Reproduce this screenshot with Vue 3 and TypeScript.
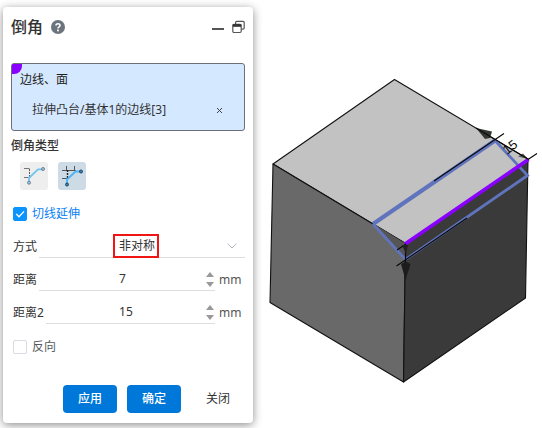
<script setup lang="ts">
import { ref } from 'vue'

interface Distance {
  id: string
  label: string
  value: number
}

const tangent = ref(true)
const reverse = ref(false)
const mode = ref('非对称')
const chamferType = ref(1)
const picked = ref<string[]>(['拉伸凸台/基体1的边线[3]'])
const distances = ref<Distance[]>([
  { id: 'distance-1', label: '距离', value: 7 },
  { id: 'distance-2', label: '距离2', value: 15 },
])
</script>

<template>
  <main class="workspace">
    <form class="panel" @submit.prevent>
      <header class="head">
        <h1>倒角</h1>
        <button type="button" class="plain" aria-label="帮助">
          <svg width="14" height="14" viewBox="0 0 14 14">
            <circle cx="7" cy="7" r="7" fill="#6c757d" />
            <path d="M5 5.6C5 3.2 9 3.2 9 5.5C9 7 7 6.8 7 8.6" fill="none" stroke="#fff" stroke-width="1.6" />
            <rect x="6.1" y="9.6" width="1.8" height="1.7" fill="#fff" />
          </svg>
        </button>
        <span class="grow"></span>
        <button type="button" class="plain" aria-label="最小化">
          <svg width="12" height="14" viewBox="0 0 12 14"><path d="M0 9H12" stroke="#555" stroke-width="2" /></svg>
        </button>
        <button type="button" class="plain" aria-label="还原">
          <svg width="13" height="14" viewBox="0 0 13 14" fill="none" stroke="#555" stroke-width="1.2">
            <path d="M3.6 4V2.4Q3.6 1.3 4.7 1.3H11Q12.2 1.3 12.2 2.4V8Q12.2 9.2 11 9.2H9.5" />
            <rect x="0.8" y="4.3" width="8.4" height="8.2" rx="1.2" fill="#fff" />
            <path d="M0.8 5.5H9.2" stroke="#333" stroke-width="2.6" />
          </svg>
        </button>
      </header>

      <section class="selection">
        <span class="corner"></span>
        <h2>边线、面</h2>
        <div v-for="(item, i) in picked" :key="item" class="picked">
          <span>{{ item }}</span>
          <button type="button" class="plain" aria-label="移除" @click="picked.splice(i, 1)">
            <svg width="7" height="7" viewBox="0 0 7 7"><path d="M1 1L6 6M6 1L1 6" stroke="#444" /></svg>
          </button>
        </div>
      </section>

      <h3>倒角类型</h3>
      <div class="types">
        <button type="button" :class="{ active: chamferType === 0 }" aria-label="单侧" @click="chamferType = 0">
          <svg width="28" height="28" viewBox="0 0 28 28" fill="none">
            <path d="M4 6.5H9.5M4 15.5H9.5" stroke="#777" />
            <path d="M9.5 7V16" stroke="#555" stroke-dasharray="2 1" />
            <path d="M9 20V16L18 7.3H22" stroke="#74c4f2" stroke-width="1.8" />
            <circle cx="23" cy="7" r="1.5" fill="#a9c4d6" stroke="#61879f" />
            <circle cx="9" cy="20.7" r="1.5" fill="#a9c4d6" stroke="#61879f" />
          </svg>
        </button>
        <button type="button" :class="{ active: chamferType === 1 }" aria-label="双侧" @click="chamferType = 1">
          <svg width="28" height="28" viewBox="0 0 28 28" fill="none">
            <path d="M8.5 4V9M16.5 4V9M4 8.5H18M4 16.5H9.5" stroke="#555" />
            <path d="M9.5 8V17" stroke="#222" stroke-width="1.4" stroke-dasharray="2 1" />
            <path d="M9 22V17.5L17.5 9.5H22" stroke="#4db5f5" stroke-width="1.8" />
            <circle cx="23" cy="9.5" r="1.5" fill="#3f83b0" stroke="#174563" />
            <circle cx="9" cy="22.5" r="1.5" fill="#3f83b0" stroke="#174563" />
          </svg>
        </button>
      </div>

      <label class="check tangent">
        <input v-model="tangent" type="checkbox" />
        <svg v-if="tangent" class="tick" viewBox="0 0 14 14"><path d="M3.3 7L6 9.7L11 4.4" fill="none" stroke="#fff" stroke-width="1.3" /></svg>
        切线延伸
      </label>

      <div class="row">
        <label for="mode">方式</label>
        <div class="field">
          <select id="mode" v-model="mode">
            <option>非对称</option>
            <option>对称</option>
          </select>
          <svg class="chevron" width="10" height="6" viewBox="0 0 10 6"><path d="M0.5 0.5L5 5L9.5 0.5" fill="none" stroke="#b5b8c0" /></svg>
          <span class="marker"></span>
        </div>
      </div>

      <div v-for="d in distances" :key="d.id" class="row">
        <label :for="d.id">{{ d.label }}</label>
        <div class="field">
          <input :id="d.id" v-model.number="d.value" type="text" inputmode="decimal" />
          <span class="spin">
            <button type="button" class="plain" aria-label="增加" @click="d.value++">
              <svg width="8" height="5" viewBox="0 0 8 5"><path d="M0 5L4 0L8 5Z" fill="#999" /></svg>
            </button>
            <button type="button" class="plain" aria-label="减少" @click="d.value--">
              <svg width="8" height="5" viewBox="0 0 8 5"><path d="M0 0L4 5L8 0Z" fill="#999" /></svg>
            </button>
          </span>
        </div>
        <span class="unit">mm</span>
      </div>

      <label class="check">
        <input v-model="reverse" type="checkbox" />
        <svg v-if="reverse" class="tick" viewBox="0 0 14 14"><path d="M3.3 7L6 9.7L11 4.4" fill="none" stroke="#fff" stroke-width="1.3" /></svg>
        反向
      </label>

      <footer class="actions">
        <button type="button" class="primary">应用</button>
        <button type="submit" class="primary">确定</button>
        <button type="button">关闭</button>
      </footer>
    </form>

    <svg class="model" viewBox="254 0 288 428" role="img" aria-label="立方体倒角预览">
      <g stroke="#111" stroke-width="1.1" stroke-linejoin="round">
        <path d="M394.5 79.5L528 159L405.5 243.5L273 164Z" fill="#c2c2c2" />
        <path d="M273 164L405.5 243.5L403.5 382L270 302.5Z" fill="#696969" />
        <path d="M405.5 243.5L528 159L525.5 298L403.5 382Z" fill="#3a3a3a" />
      </g>
      <path d="M374 224L405.5 243.5V259Z" fill="#555" />
      <path d="M476 128L492 131.5L490 138L485 139Z" fill="#343734" />
      <path d="M518 156.500L523 153.500L528 159Z" fill="#555" />
      <g fill="none" stroke="#6074bd" stroke-width="2.8">
        <path d="M495 140.500L527.500 175.500L405.500 259.500L373 224" />
        <path d="M373 224L495 140.500" stroke-width="4.2" />
      </g>
      <path d="M405 244L528.500 159.500" stroke="#8a00ff" stroke-width="3.6" />
      <g stroke="#080808" stroke-width="1.1">
        <path d="M434 181L504 133.500M528 159.500L537 153.500M397 250L406 244M396.500 266L467 218M405.500 244V279M476 128L528 159" />
      </g>
      <path d="M402 245H408L406 254Z" fill="#222" />
      <path d="M401 264L405.500 261.500L410.500 264L405.500 280Z" fill="#1c1c1c" />
      <text class="dimension" transform="translate(507 155) rotate(-38)">15</text>
    </svg>
  </main>
</template>

<style>
body {
  margin: 0;
  background: #fff;
}
</style>

<style scoped>
* {
  box-sizing: border-box;
}

.workspace {
  display: flex;
  align-items: flex-start;
  min-height: 100vh;
  overflow: hidden;
  font-family: "Noto Sans", "Noto Sans CJK SC", sans-serif;
  font-size: 12px;
  line-height: 20px;
  color: #333;
}

.panel {
  flex: 0 0 250px;
  margin: 7px 0 5px 3px;
  padding: 8px 8px 10px;
  border-radius: 4px;
  background: #fff;
  box-shadow: 0 2px 10px rgba(0, 0, 0, 0.45);
}

button,
input,
select {
  margin: 0;
  font: inherit;
  color: inherit;
}

.plain {
  display: flex;
  padding: 0;
  border: 0;
  background: none;
}

.head {
  display: flex;
  align-items: center;
  gap: 8px;
  height: 24px;
  margin-bottom: 24px;
}

h1,
h2,
h3 {
  margin: 0;
  font-size: 12px;
  font-weight: 400;
}

.head h1 {
  font-size: 16px;
  font-weight: 500;
}

.grow {
  flex: 1;
}

.selection {
  position: relative;
  height: 68px;
  padding: 6px 8px;
  border: 1px solid #6b7078;
  border-radius: 3px;
  background: #d4e8ff;
}

.corner {
  position: absolute;
  top: 0;
  left: 0;
  width: 10px;
  height: 10px;
  border-radius: 1px 0 8px 0;
  background: #8a00ff;
}

.selection h2 {
  position: relative;
  color: #222;
}

.picked {
  display: flex;
  align-items: center;
  justify-content: space-between;
  margin-top: 10px;
  padding: 0 13px 0 12px;
}

h3 {
  margin-top: 5px;
  font-weight: 500;
}

.types {
  display: flex;
  gap: 10px;
  padding: 6px 9px 0;
}

.types button {
  display: flex;
  padding: 0;
  border: 0;
  border-radius: 3px;
  background: #eee;
}

.types .active {
  background: #cddbe6;
}

.check {
  position: relative;
  display: flex;
  align-items: center;
  gap: 5px;
  margin: 8px 2px 0;
  color: #555a60;
}

.check input {
  width: 14px;
  height: 14px;
  appearance: none;
  border: 1px solid #d9dce3;
  border-radius: 2px;
  background: #fff;
}

.check input:checked {
  border-color: #0a94ff;
  background: #0a94ff;
}

.tick {
  position: absolute;
  left: 0;
  width: 14px;
  height: 14px;
  pointer-events: none;
}

.tangent {
  margin: 14px 2px 6px;
  color: #0a80f5;
}

.row {
  display: flex;
  align-items: center;
  gap: 2px;
  height: 33px;
  padding-left: 2px;
}

.field {
  position: relative;
  display: flex;
  flex: 1;
  align-items: center;
  min-width: 0;
  height: 22px;
  border-bottom: 1px solid #dcdee2;
}

.field input,
.field select {
  flex: 1;
  min-width: 0;
  width: 100%;
  height: 20px;
  padding: 0 10px 0 0;
  border: 0;
  outline: 0;
  appearance: none;
  background: none;
  text-align: center;
  text-align-last: center;
}

.field input {
  padding: 0;
}

.chevron {
  position: absolute;
  right: 8px;
  pointer-events: none;
}

.marker {
  position: absolute;
  top: -2px;
  left: calc(50% - 29px);
  width: 46px;
  height: 24px;
  border: 2px solid #f01414;
  pointer-events: none;
}

.spin {
  display: flex;
  flex-direction: column;
  gap: 5px;
  width: 9px;
}

.unit {
  width: 28px;
  padding-left: 2px;
  color: #555;
}

.actions {
  display: flex;
  align-items: center;
  justify-content: flex-end;
  gap: 10px;
  margin-top: 28px;
}

.actions button {
  width: 54px;
  height: 28px;
  padding: 0;
  border: 0;
  border-radius: 4px;
  background: none;
}

.actions .primary {
  background: #0078d9;
  color: #fff;
  font-weight: 500;
}

.model {
  flex: 1;
  min-width: 0;
  margin-left: 1px;
}

.dimension {
  font-family: "Liberation Sans", sans-serif;
  font-size: 13px;
  fill: #080808;
}
</style>
